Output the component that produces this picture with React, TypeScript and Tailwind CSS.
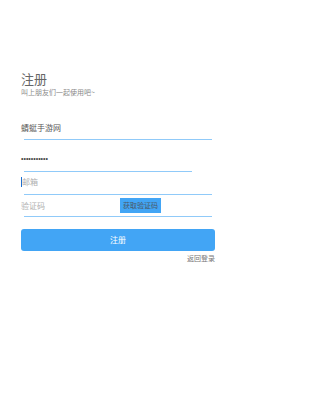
const cjk = { fontFamily: '"Noto Sans CJK SC", "Noto Sans", sans-serif' };

export default function App() {
  return (
    <div className="w-[236px] h-[420px] bg-white" style={cjk}>
      <div className="flex flex-col px-[21px] pt-[71px]">
        <h1 className="h-[15px] text-[13px] leading-[15px] text-[#666] font-normal">注册</h1>
        <p className="mt-[2px] h-[9px] text-[7px] leading-[9px] text-[#8a8a8a]">叫上朋友们一起使用吧~</p>

        <div className="mt-[26px] h-[10px] text-[8px] leading-[10px] text-[#555]">蜻蜓手游网</div>
        <div className="mt-[6px] mx-[3px] h-px bg-[#90caf9]" />

        <div
          className="mt-[14px] h-[10px] text-[7px] leading-[10px] text-[#444]"
          style={{ fontFamily: '"Liberation Sans", sans-serif' }}
        >
          •••••••••••
        </div>
        <div className="mt-[7px] ml-[3px] mr-[23px] h-px bg-[#90caf9]" />

        <div className="mt-[5px] h-[10px] flex items-center text-[8px] leading-[10px]">
          <span className="w-px h-[10px] bg-[#1e6fd0]" />
          <span className="text-[#b0b0b0]">邮箱</span>
        </div>
        <div className="mt-[7px] mx-[3px] h-px bg-[#90caf9]" />

        <div className="mt-[3px] h-[15px] flex items-center">
          <span className="w-[99px] text-[8px] leading-[10px] text-[#b0b0b0]">验证码</span>
          <button className="w-[41px] h-[15px] bg-[#42a5f5] text-[7px] leading-[15px] text-[#4a5a6a] text-center">
            获取验证码
          </button>
        </div>
        <div className="mt-[3px] mx-[3px] h-px bg-[#90caf9]" />

        <button className="mt-[12px] h-[22px] rounded-[3px] bg-[#42a5f5] text-white text-[8px] leading-[22px]">
          注册
        </button>
        <div className="mt-[3px] h-[8px] self-end text-[7px] leading-[8px] text-[#777]">返回登录</div>
      </div>
    </div>
  );
}
